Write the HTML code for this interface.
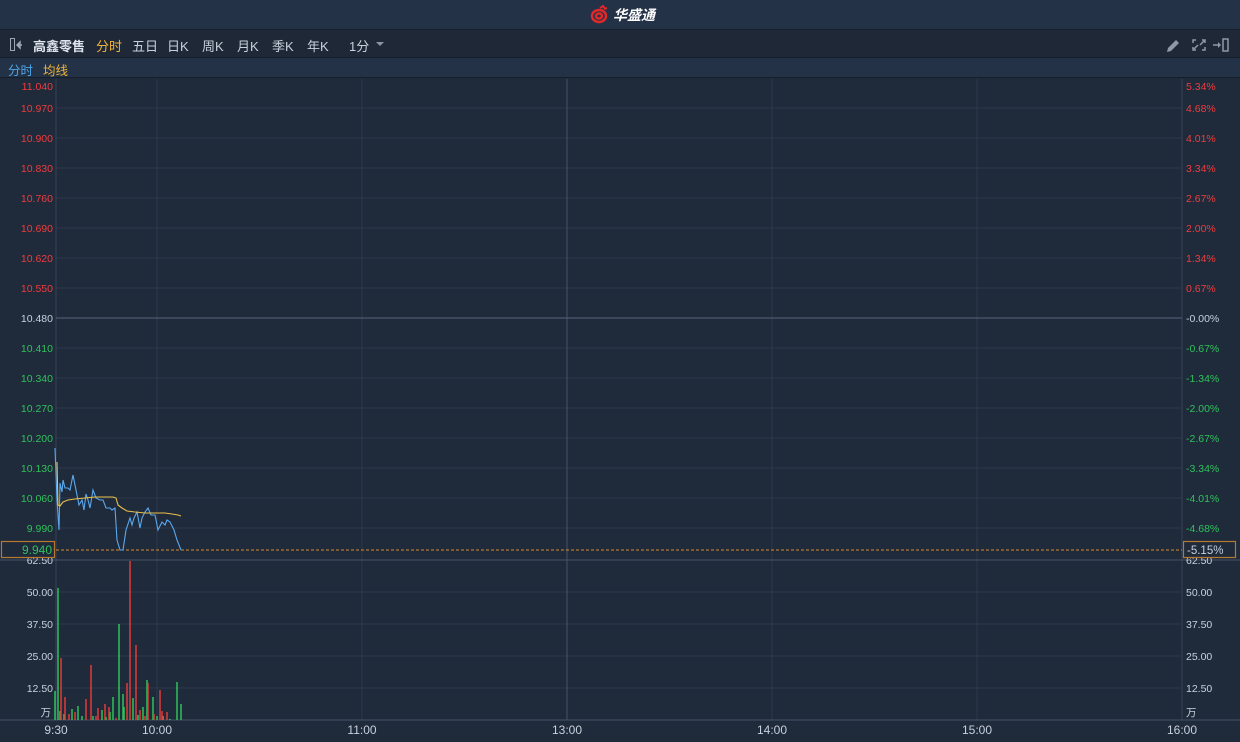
<!DOCTYPE html>
<html><head><meta charset="utf-8"><style>
*{margin:0;padding:0;box-sizing:border-box}
body{width:1240px;height:742px;background:#1f2a3b;font-family:"Liberation Sans","Noto Sans CJK SC",sans-serif;overflow:hidden;position:relative}
.hdr{position:absolute;left:0;top:0;width:1240px;height:30px;background:#243247;border-bottom:1px solid #18202c}
.tb{position:absolute;left:0;top:31px;width:1240px;height:27px;background:#1e2837;border-bottom:1px solid #161e29;font-size:13px;color:#c8d0dc}
.tb span{position:absolute;top:5px}
.sb{position:absolute;left:0;top:58px;width:1240px;height:20px;background:#243247;border-bottom:1px solid #161e29;font-size:12.5px}
svg{position:absolute;left:0;top:0}
</style></head><body>
<div class="hdr"></div>
<div class="tb">
<span style="left:10px;top:7px;width:5px;height:13px;border:1.5px solid #9aa4b2"></span>
<span style="left:33px;color:#dfe5ee;font-weight:bold">高鑫零售</span>
<span style="left:96px;color:#f0b437">分时</span>
<span style="left:132px">五日</span>
<span style="left:167px">日K</span>
<span style="left:202px">周K</span>
<span style="left:237px">月K</span>
<span style="left:272px">季K</span>
<span style="left:307px">年K</span>
<span style="left:349px">1分</span>
</div>
<div class="sb"><span style="position:absolute;left:8px;top:2px;color:#4ea6e8">分时</span><span style="position:absolute;left:43px;top:2px;color:#f0b437">均线</span></div>
<svg width="1240" height="742" viewBox="0 0 1240 742">
<path d="M17 45h5 M17 45l3-3v6z" stroke="#9aa4b2" fill="#9aa4b2" stroke-width="1.5"/>
<path d="M376 42h8l-4 4z" fill="#8a94a2"/>
<g transform="translate(590,6)"><path d="M2 10 a7 6 0 1 0 14 0 a7 6 0 1 0 -14 0 M6 10 a3 2.5 0 1 0 6 0 a3 2.5 0 1 0 -6 0" fill="none" stroke="#e02828" stroke-width="2.5"/><path d="M10 2 l3 -2 l2 3 M14 3 l3 -1" stroke="#e02828" stroke-width="2" fill="none"/></g>
<text x="613" y="20" fill="#fff" font-size="14" font-weight="bold" font-style="italic" font-family="Noto Sans CJK SC,sans-serif">华盛通</text>
<g fill="#8e98a6"><path d="M1168 48 l8 -8 l3 3 l-8 8 l-4 1z"/></g>
<g stroke="#8e98a6" stroke-width="1.5" fill="none"><path d="M1193 43v-3h3 M1205 43v-3h-3 M1193 47v3h3 M1205 47v3h-3 M1194 49l4-4 M1204 41l-4 4"/><rect x="1223" y="39" width="5" height="12"/><path d="M1213 45h6"/></g>
<path d="M1221 45l-3-3v6z" fill="#8e98a6"/>
<g stroke="#2d3a4e" stroke-width="1">
<path d="M56 108H1182M56 138H1182M56 168H1182M56 198H1182M56 228H1182M56 258H1182M56 288H1182M56 348H1182M56 378H1182M56 408H1182M56 438H1182M56 468H1182M56 498H1182M56 528H1182M56 592H1182M56 624H1182M56 656H1182M56 688H1182"/>
<path d="M157 79V720M362 79V720M772 79V720M977 79V720"/>
</g>
<path d="M567 79V720" stroke="#45536a"/>
<path d="M56 79V720M1182 79V720" stroke="#34425a"/>
<path d="M56 318H1182" stroke="#56647c"/>
<path d="M0 560H1240" stroke="#45536a"/>
<path d="M0 720H1240" stroke="#45536a"/>
<g font-size="10.5" text-anchor="end" fill="#f03c3c">
<text x="53" y="90">11.040</text><text x="53" y="112">10.970</text><text x="53" y="142">10.900</text><text x="53" y="172">10.830</text><text x="53" y="202">10.760</text><text x="53" y="232">10.690</text><text x="53" y="262">10.620</text><text x="53" y="292">10.550</text>
</g>
<text x="53" y="322" font-size="10.5" text-anchor="end" fill="#c8d0dc">10.480</text>
<g font-size="10.5" text-anchor="end" fill="#2fc25b">
<text x="53" y="352">10.410</text><text x="53" y="382">10.340</text><text x="53" y="412">10.270</text><text x="53" y="442">10.200</text><text x="53" y="472">10.130</text><text x="53" y="502">10.060</text><text x="53" y="532">9.990</text>
</g>
<g font-size="10.5" fill="#f03c3c">
<text x="1186" y="90">5.34%</text><text x="1186" y="112">4.68%</text><text x="1186" y="142">4.01%</text><text x="1186" y="172">3.34%</text><text x="1186" y="202">2.67%</text><text x="1186" y="232">2.00%</text><text x="1186" y="262">1.34%</text><text x="1186" y="292">0.67%</text>
</g>
<text x="1186" y="322" font-size="10.5" fill="#c8d0dc">-0.00%</text>
<g font-size="10.5" fill="#2fc25b">
<text x="1186" y="352">-0.67%</text><text x="1186" y="382">-1.34%</text><text x="1186" y="412">-2.00%</text><text x="1186" y="442">-2.67%</text><text x="1186" y="472">-3.34%</text><text x="1186" y="502">-4.01%</text><text x="1186" y="532">-4.68%</text>
</g>
<g font-size="10.5" fill="#c8d0dc">
<text x="53" y="564" text-anchor="end">62.50</text><text x="53" y="596" text-anchor="end">50.00</text><text x="53" y="628" text-anchor="end">37.50</text><text x="53" y="660" text-anchor="end">25.00</text><text x="53" y="692" text-anchor="end">12.50</text><text x="51" y="716" text-anchor="end" font-family="Noto Sans CJK SC,sans-serif">万</text>
<text x="1186" y="564">62.50</text><text x="1186" y="596">50.00</text><text x="1186" y="628">37.50</text><text x="1186" y="660">25.00</text><text x="1186" y="692">12.50</text><text x="1186" y="716" font-family="Noto Sans CJK SC,sans-serif">万</text>
</g>
<g font-size="12" fill="#c8d0dc" text-anchor="middle">
<text x="56" y="734">9:30</text><text x="157" y="734">10:00</text><text x="362" y="734">11:00</text><text x="567" y="734">13:00</text><text x="772" y="734">14:00</text><text x="977" y="734">15:00</text><text x="1182" y="734">16:00</text>
</g>
<path d="M56 550H1182" stroke="#d98a2f" stroke-dasharray="3,2"/>
<rect x="1.5" y="541.5" width="53" height="16" fill="#1f2a3b" stroke="#b8772e" stroke-width="1.2"/>
<text x="52" y="554" font-size="12" text-anchor="end" fill="#2fc25b">9.940</text>
<rect x="1183.5" y="541.5" width="52" height="16" fill="#1f2a3b" stroke="#b8772e" stroke-width="1.2"/>
<text x="1187" y="554" font-size="11.5" fill="#c8d0dc">-5.15%</text>
<polyline fill="none" stroke="#5aa8ee" stroke-width="1.1" points="55,448 57,500 59,530 60,483 62,492 63,480 65,488 68,488 70,490 73,475 76,490 79,505 82,500 84,510 86,494 88,500 90,508 93,490 96,498 100,500 103,500 106,508 110,508 112,510 115,508 117,540 120,550 123,550 126,530 130,518 132,525 134,518 137,512 140,528 142,518 145,512 148,508 151,515 155,515 158,530 162,522 165,525 167,520 170,522 174,530 177,540 181,550"/>
<polyline fill="none" stroke="#e8c04a" stroke-width="1.1" points="57,462 58,505 60,506 63,502 68,500 75,499 85,498 95,497 105,497 113,497 116,498 118,505 122,508 127,511 135,512 145,513 155,513 165,513 172,514 178,515 181,516"/>
<g stroke-width="1.5">
<g stroke="#2fc25b"><path d="M55 720V691M58 720V588M60 720V711M64 720V714M72 720V709M78 720V706M82 720V716M91 720V720M93 720V716M102 720V710M106 720V717M110 720V712M113 720V697M119 720V624M123 720V694M124 720V707M133 720V698M138 720V715M143 720V707M147 720V680M153 720V697M157 720V716M163 720V716M170 720V719M177 720V682M181 720V704"/></g>
<g stroke="#e23b3b"><path d="M61 720V658M65 720V697M69 720V714M75 720V712M86 720V699M91 720V665M96 720V716M98 720V708M105 720V704M109 720V707M116 720V718M127 720V683M130 720V561M136 720V645M140 720V710M148 720V683M145 720V716M154 720V714M160 720V690M162 720V711M167 720V712"/></g>
</g>
</svg>
</body></html>
